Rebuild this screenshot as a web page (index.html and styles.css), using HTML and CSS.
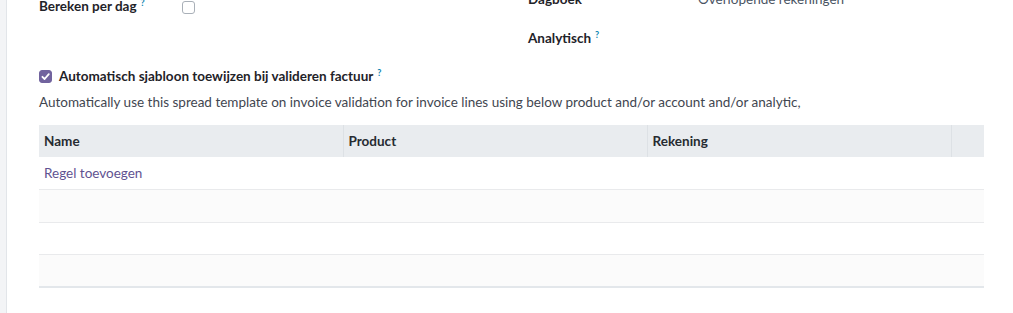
FILE: index.html
```html
<!DOCTYPE html>
<html>
<head>
<meta charset="utf-8">
<link rel="stylesheet" href="styles.css">
</head>
<body>
<div class="page">
  <div class="gutter"></div>
  <div class="sheet">
    <div class="group">
      <div class="col col-left">
        <div class="field">
          <div class="label">Bereken per dag<sup class="tip">?</sup></div>
          <div class="value"><span class="cb"></span></div>
        </div>
      </div>
      <div class="col col-right">
        <div class="field">
          <div class="label">Dagboek</div>
          <div class="value text">Overlopende rekeningen</div>
        </div>
        <div class="field">
          <div class="label">Analytisch<sup class="tip">?</sup></div>
          <div class="value"></div>
        </div>
      </div>
    </div>

    <div class="auto">
      <span class="cb checked"><svg viewBox="0 0 13 13" width="13" height="13"><path d="M3.4 6.8 L5.6 9 L9.8 4.2" fill="none" stroke="#fff" stroke-width="1.8" stroke-linecap="round" stroke-linejoin="round"/></svg></span>
      <span class="label">Automatisch sjabloon toewijzen bij valideren factuur<sup class="tip">?</sup></span>
    </div>
    <p class="desc">Automatically use this spread template on invoice validation for invoice lines using below product and/or account and/or analytic,</p>

    <table class="lines">
      <colgroup>
        <col class="c1"><col class="c2"><col class="c3"><col class="c4">
      </colgroup>
      <thead>
        <tr><th>Name</th><th>Product</th><th>Rekening</th><th></th></tr>
      </thead>
      <tbody>
        <tr><td colspan="4"><a class="add" href="#">Regel toevoegen</a></td></tr>
        <tr class="stripe tall"><td colspan="4"></td></tr>
        <tr><td colspan="4"></td></tr>
        <tr class="stripe last"><td colspan="4"></td></tr>
      </tbody>
    </table>
  </div>
</div>
</body>
</html>
```
FILE: styles.css
```css
* { box-sizing: border-box; }
html, body { margin: 0; padding: 0; background: #fff; }
body {
  font-family: Lato, "Liberation Sans", sans-serif;
  font-size: 13.5px;
  line-height: 20px;
  color: #374151;
  overflow: hidden;
}
.page {
  display: flex;
  height: 313px;
}
.gutter {
  width: 7px;
  flex: none;
  background: #f3f4f6;
  border-right: 1px solid #e2e5e9;
}
.sheet {
  flex: 1;
  padding-left: 32px;
  padding-right: 29px;
}
.group {
  display: flex;
  margin-top: -11px;
}
.col-left {
  width: 489px;
  padding-top: 7px;
}
.col-right {
  flex: 1;
  display: flex;
  flex-direction: column;
  gap: 19px;
}
.field {
  display: flex;
  align-items: center;
  min-height: 20px;
}
.col-left .label { width: 143px; }
.col-right .label { width: 170px; }
.label {
  font-weight: 700;
  color: #1f2329;
  white-space: nowrap;
}
.value.text { color: #4b5563; }
.tip {
  color: #0d84b0;
  font-size: 9px;
  font-weight: 700;
  margin-left: 4px;
  vertical-align: 5px;
  line-height: 0;
}
.cb {
  display: inline-block;
  width: 13px;
  height: 13px;
  border: 1px solid #a9b0b8;
  border-radius: 3px;
  background: #fff;
  vertical-align: middle;
}
.cb.checked {
  background: #71639e;
  border-color: #71639e;
  display: flex;
  align-items: center;
  justify-content: center;
}
.cb.checked svg { display: block; margin: -1px; }
.auto {
  display: flex;
  align-items: center;
  gap: 7px;
  margin-top: 18px;
  height: 20px;
}
.auto .label { font-weight: 700; }
.desc {
  margin: 6px 0 0;
  color: #3f4650;
  white-space: nowrap;
}
.lines {
  margin-top: 13px;
  width: 945px;
  border-collapse: collapse;
  table-layout: fixed;
}
.c1, .c2, .c3 { width: 304px; }
.c4 { width: 33px; }
.lines th {
  background: #e9ecef;
  height: 32px;
  padding: 6px 5px;
  text-align: left;
  font-weight: 700;
  color: #262b31;
  border-left: 1px solid #dde1e5;
}
.lines th:first-child { border-left: none; }
.lines td {
  height: 32px;
  padding: 6px 5px;
  border-bottom: 1px solid #e9eaec;
}
.lines tr.tall td { height: 33px; }
.lines tr.stripe td { background: #fbfbfb; }
.lines tr.last td { border-bottom: 2px solid #e3e7eb; }
.add {
  color: #5f5291;
  text-decoration: none;
}
```
